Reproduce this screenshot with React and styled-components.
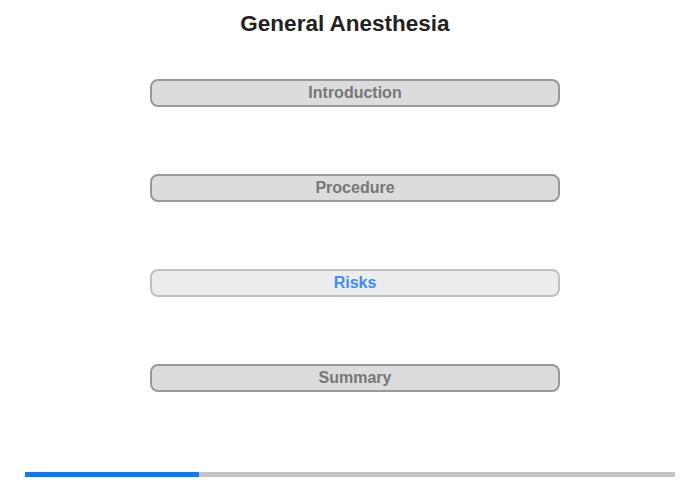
import React from "react";
import styled, { createGlobalStyle } from "styled-components";

const Global = createGlobalStyle`
  html, body { margin: 0; padding: 0; background: #fff; }
  body { font-family: "Liberation Sans", Arial, sans-serif; }
`;

const Page = styled.div`
  width: 700px;
  height: 480px;
  display: flex;
  flex-direction: column;
`;

const Title = styled.h1`
  margin: 0;
  padding: 11px 10px 0 0;
  height: 37px;
  box-sizing: border-box;
  text-align: center;
  font-family: "Liberation Sans", Arial, sans-serif;
  font-size: 22.5px;
  font-weight: bold;
  color: #222;
  line-height: 26px;
`;

const Menu = styled.div`
  display: flex;
  flex-direction: column;
  gap: 67px;
  margin: 42px 0 0 150px;
  width: 410px;
`;

const MenuButton = styled.div`
  box-sizing: border-box;
  height: 28px;
  border-radius: 8px;
  border: 2px solid ${(p) => (p.$active ? "#c0c0c0" : "#999")};
  background: ${(p) => (p.$active ? "#ececec" : "#dcdcdc")};
  color: ${(p) => (p.$active ? "#3d8ef7" : "#777")};
  font-family: "Liberation Sans", Arial, sans-serif;
  font-size: 16px;
  font-weight: bold;
  display: flex;
  align-items: center;
  justify-content: center;
  line-height: 1;
`;

const Progress = styled.div`
  margin: auto 25px 3px 25px;
  height: 5px;
  background: #c4c4c4;
  display: flex;
`;

const ProgressFill = styled.div`
  height: 100%;
  background: #0a7bf9;
`;

const items = ["Introduction", "Procedure", "Risks", "Summary"];

export default function App() {
  return (
    <Page>
      <Global />
      <Title>General Anesthesia</Title>
      <Menu>
        {items.map((it) => (
          <MenuButton key={it} $active={it === "Risks"}>
            {it}
          </MenuButton>
        ))}
      </Menu>
      <Progress>
        <ProgressFill style={{ width: `${(174 / 650) * 100}%` }} />
      </Progress>
    </Page>
  );
}
